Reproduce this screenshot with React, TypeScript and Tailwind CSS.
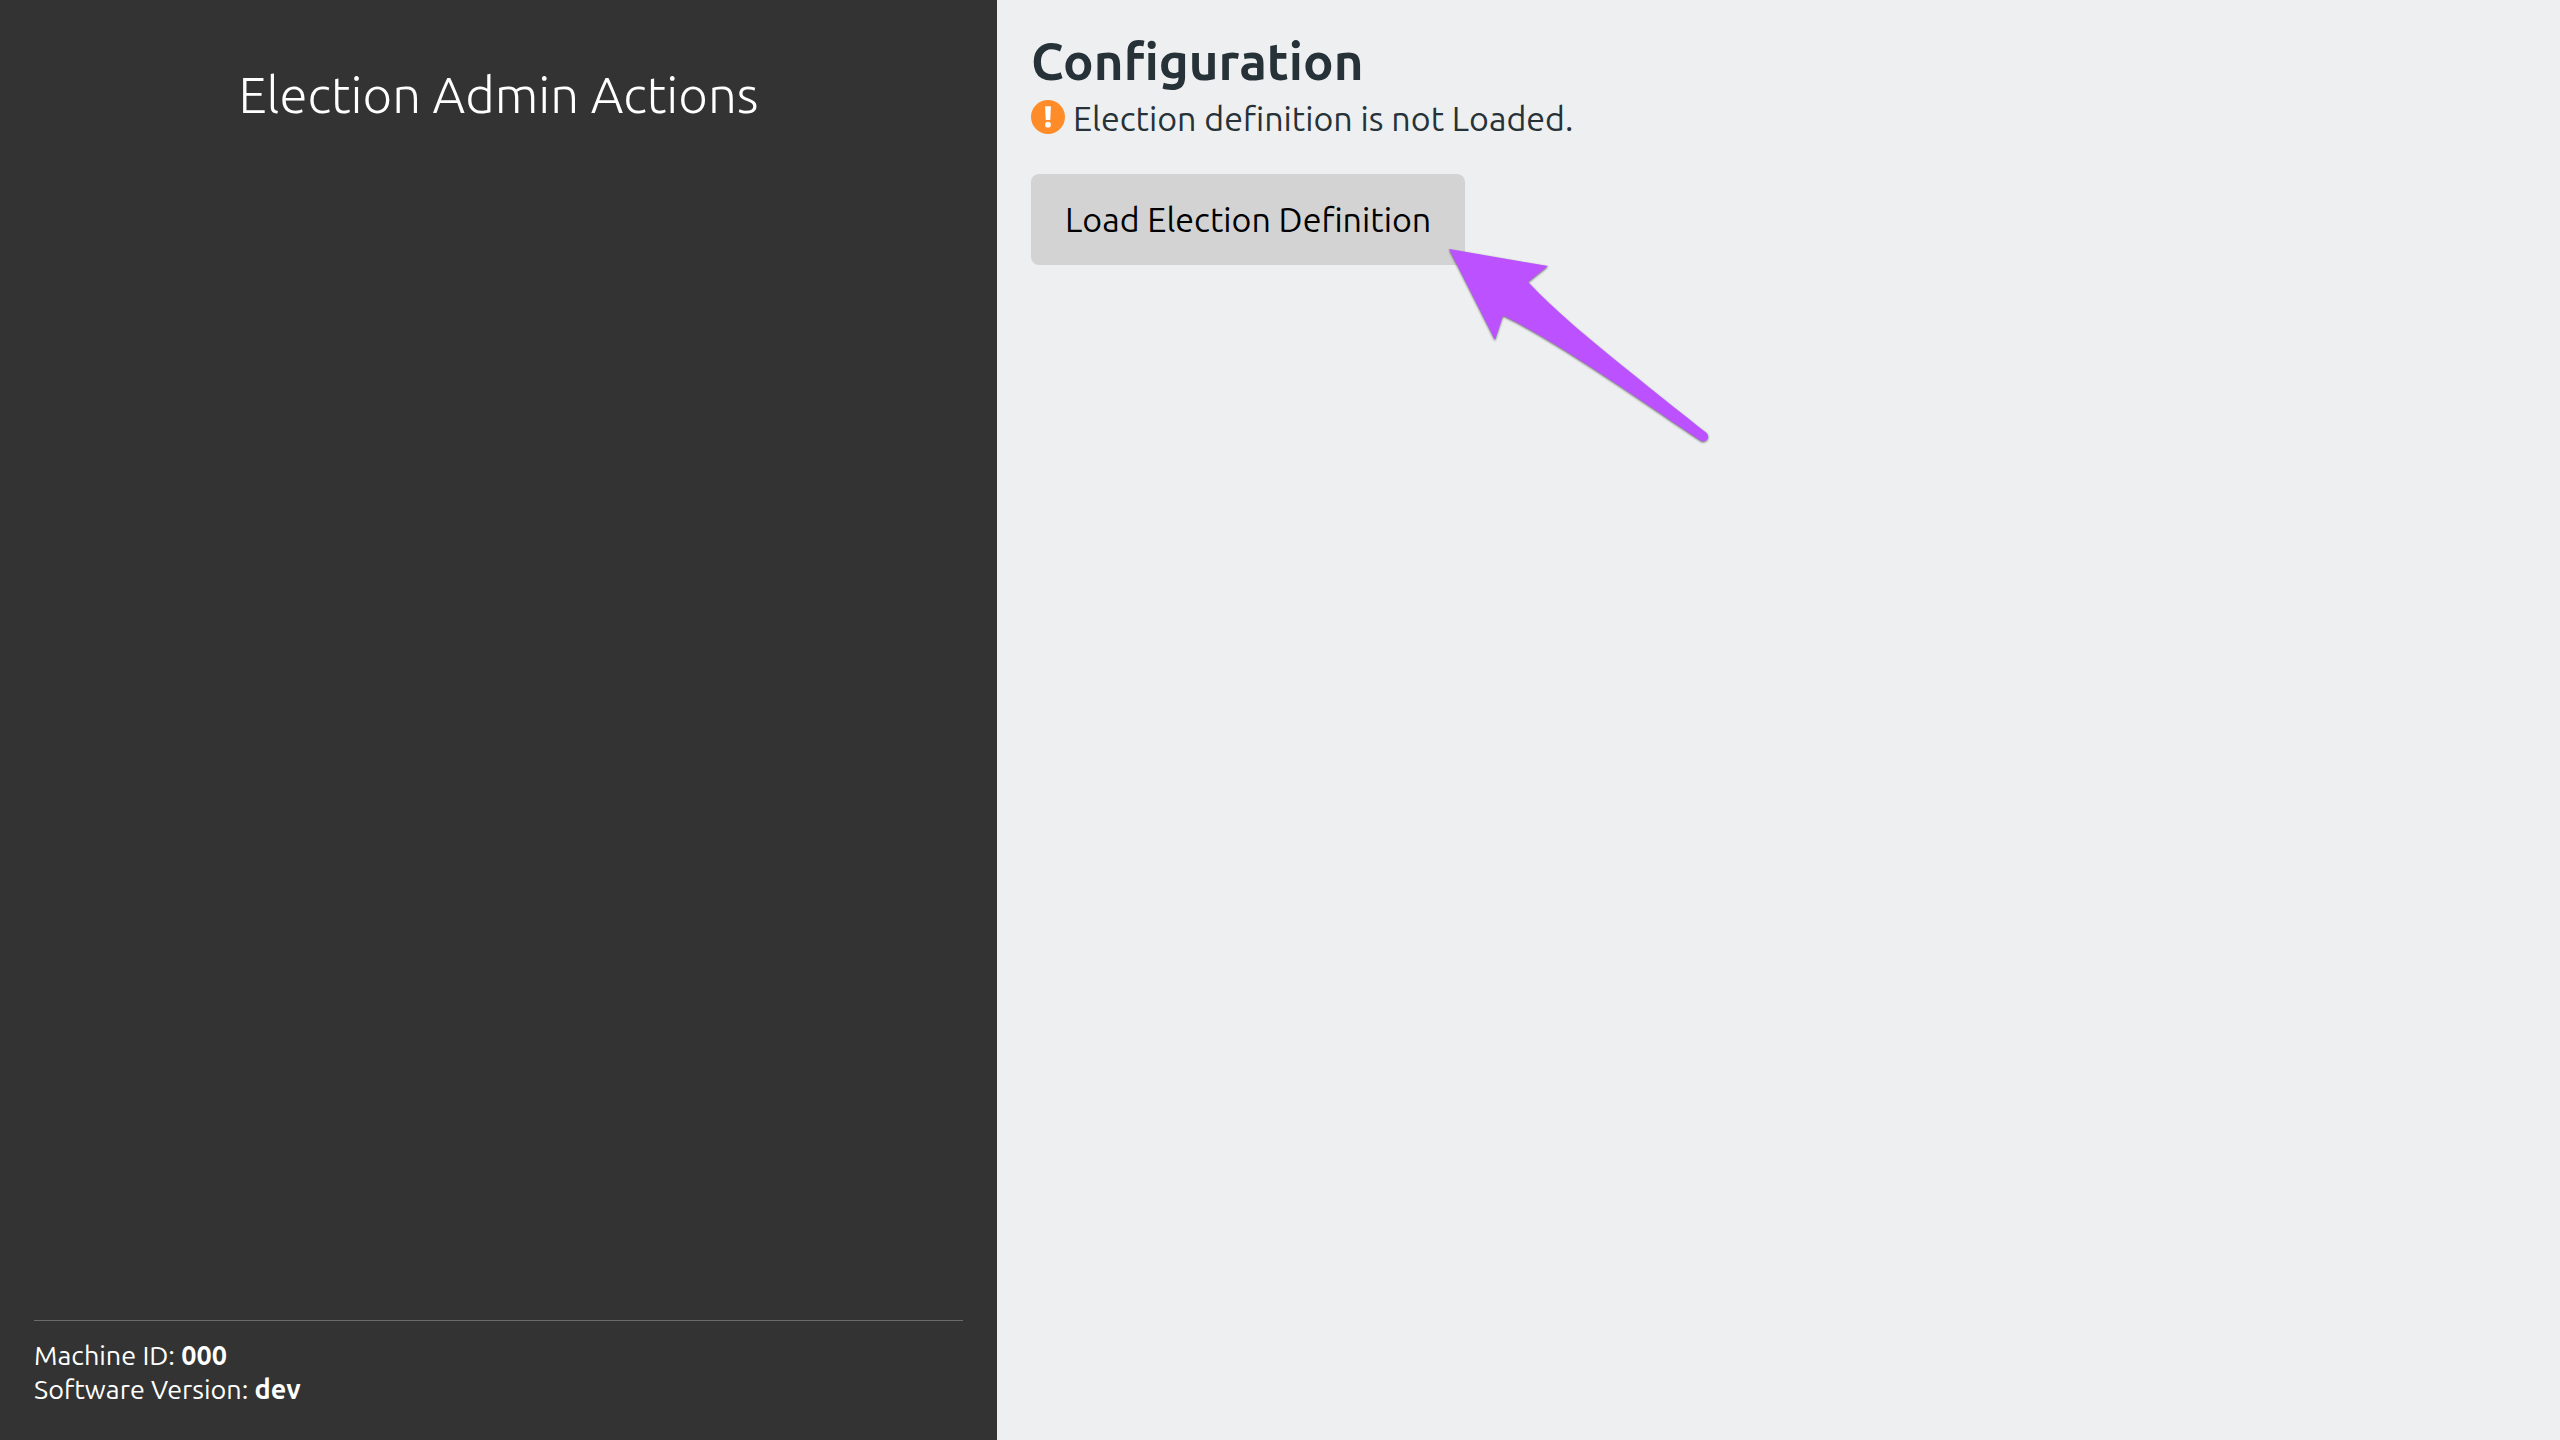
function WarningIcon() {
  return (
    <svg viewBox="8 8 496 496" className="mb-[2px] size-[34px] shrink-0" aria-hidden="true">
      <circle cx="256" cy="256" r="248" fill="#ff8c28" />
      <circle cx="256" cy="368" r="42" fill="#ffffff" />
      <path fill="#ffffff" d="M214 106 Q213 98 222 98 H290 Q299 98 298 106 L290 290 Q289 300 280 300 H232 Q223 300 222 290 Z" />
    </svg>
  );
}

function PointerArrow() {
  return (
    <svg
      viewBox="1441 241 280 212"
      className="pointer-events-none absolute top-[67px] left-[410px] h-[212px] w-[280px] drop-shadow-[0_1px_1px_rgba(0,0,0,0.55)]"
      aria-hidden="true"
    >
      <path
        fill="#bb51ff"
        d="M1449 249 L1548 266 L1528 282 C1564 320 1610 356 1706 432.500 A4.700 4.700 0 0 1 1700.500 440.500 C1650 407 1560 343 1503 315.500 L1495 340 Z"
      />
    </svg>
  );
}

export default function App() {
  return (
    <div className="grid min-h-screen grid-cols-[997fr_1563fr] font-['Ubuntu','Noto_Sans',sans-serif]">
      <aside className="flex flex-col justify-between bg-[#333333] px-[34px] pt-[66px] pb-[34px] text-white">
        <h2 className="text-center text-[51px] leading-[56px] font-light">Election Admin Actions</h2>
        <footer className="border-t border-[#6b6b6b] pt-[17px] text-[27px] leading-[34px]">
          <p>
            Machine ID: <strong>000</strong>
          </p>
          <p>
            Software Version: <strong>dev</strong>
          </p>
        </footer>
      </aside>
      <main className="bg-[#edeff0] px-[34px] py-8 text-[34px] text-[#263238]">
        <h1 className="text-[51px] leading-[58px] font-bold">Configuration</h1>
        <p className="mt-2 flex items-center gap-2 leading-[40px]">
          <WarningIcon />
          Election definition is not Loaded.
        </p>
        <div className="relative mt-9 w-fit">
          <button type="button" className="block rounded-lg bg-[#d3d3d3] px-[34px] py-[25px] leading-[41px] text-black">
            Load Election Definition
          </button>
          <PointerArrow />
        </div>
      </main>
    </div>
  );
}
